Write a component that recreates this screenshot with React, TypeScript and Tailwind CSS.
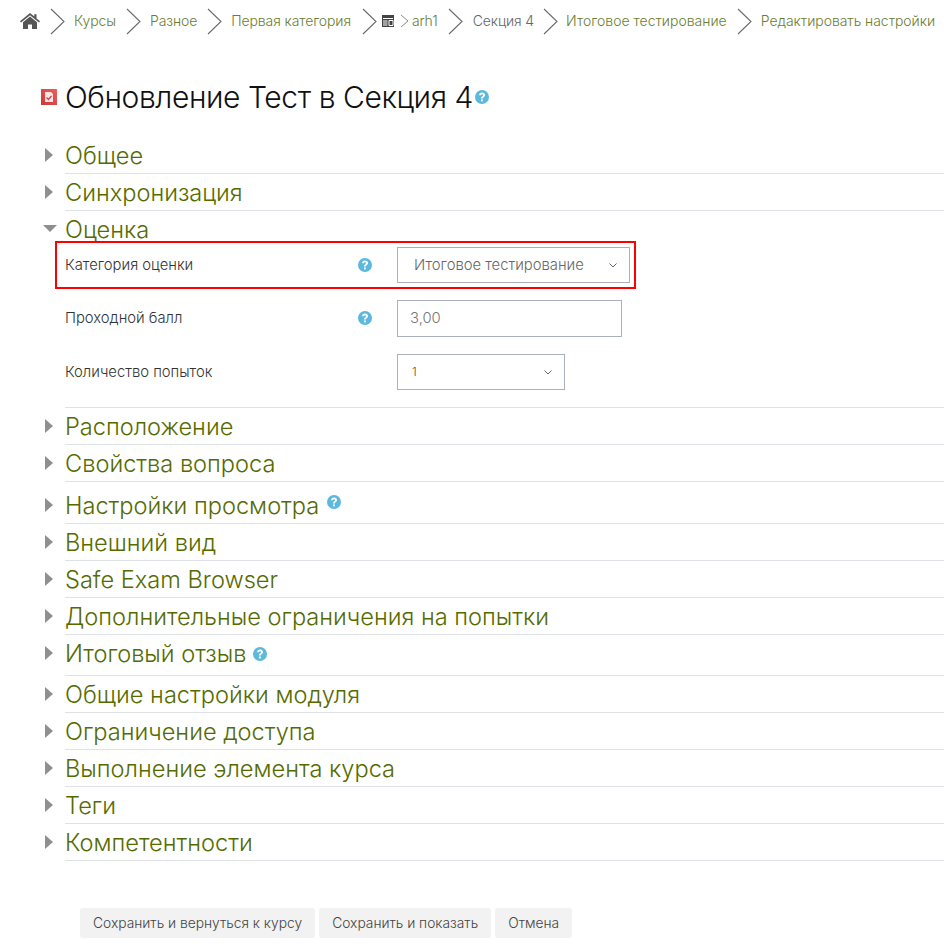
import React from 'react';

const font = "font-['Inter','Noto_Sans',sans-serif]";

const HelpIcon: React.FC<{ size?: number; className?: string }> = ({ size = 14, className = '' }) => (
  <svg width={size} height={size} viewBox="0 0 16 16" className={`shrink-0 ${className}`}>
    <circle cx="8" cy="8" r="8" fill="#5bb8de" />
    <path d="M4.6 6c.1-2 1.5-3.1 3.5-3.1 1.9 0 3.4 1.1 3.4 2.9 0 1.2-.6 1.8-1.5 2.4-.7.5-.9.8-.9 1.5H6.8c0-1.2.3-1.8 1.2-2.4.7-.5 1.1-.8 1.1-1.4 0-.6-.4-1-1-1-.8 0-1.2.4-1.3 1.1H4.6z" fill="#fff" />
    <rect x="6.8" y="10.8" width="2.2" height="2.2" fill="#fff" />
  </svg>
);

const Sep: React.FC<{ small?: boolean }> = ({ small }) =>
  small ? (
    <svg width="9" height="14" viewBox="0 0 9 14" className="shrink-0">
      <path d="M1 1l7 6-7 6" fill="none" stroke="#8a8a8a" strokeWidth="1" />
    </svg>
  ) : (
    <svg width="15" height="27" viewBox="0 0 15 27" className="shrink-0">
      <path d="M1 1l13 12.5L1 26" fill="none" stroke="#6a6a6a" strokeWidth="1.1" />
    </svg>
  );

const crumbClass = 'text-[14px] leading-none font-light whitespace-nowrap text-[#6b7d2f]';

const Section: React.FC<{ title: string; help?: boolean; extraTop?: boolean; extraBottom?: boolean }> = ({ title, help, extraTop, extraBottom }) => (
  <div className={`flex pl-[45px] ${extraTop ? 'pt-[5px]' : ''}`}>
    <div className="w-[20px] shrink-0 flex items-center h-[36px]">
      <svg width="8" height="14" viewBox="0 0 8 14"><path d="M0 0l8 7-8 7z" fill="#8f8f8f" /></svg>
    </div>
    <div className={`flex-1 border-b border-[#dee2e6] ${extraBottom ? 'pb-[4px]' : ''}`}>
      <div className="flex gap-2 items-center h-[36px] pt-[1px]">
        <h3 className="text-[23.6px] leading-none font-light text-[#556b00] whitespace-nowrap">{title}</h3>
        {help && <HelpIcon size={14} className={extraTop ? '-mt-[7px]' : '-ml-[1px]'} />}
      </div>
    </div>
  </div>
);

const Chevron: React.FC = () => (
  <svg width="8" height="5" viewBox="0 0 8 5" className="shrink-0">
    <path d="M.5.5L4 4 7.5.5" fill="none" stroke="#666" strokeWidth="1" />
  </svg>
);

const Row: React.FC<{ label: string; help?: boolean; children: React.ReactNode; className?: string }> = ({ label, help, children, className = '' }) => (
  <div className={`flex items-center ${className}`}>
    <label className="w-[293px] text-[14.8px] font-light text-[#333] whitespace-nowrap">{label}</label>
    <div className="w-[39px] flex">{help && <HelpIcon size={14} />}</div>
    {children}
  </div>
);

export default function App() {
  return (
    <div className={`${font} bg-white w-[944px] h-[951px] overflow-hidden`}>
      <nav className="flex items-center h-[42px] pl-[20px]">
        <svg width="20" height="16" viewBox="0 0 20 16" className="shrink-0 mr-[10px]">
          <path d="M10 0L0 8.3l1 1.2L10 2.2l9 7.3 1-1.2-3.5-2.9V1.2h-2.2v2.3z" fill="#555" />
          <path d="M10 3.6L3 9.3V16h5v-4.5h4V16h5V9.3z" fill="#555" />
        </svg>
        <Sep />
        <a className={`${crumbClass} tracking-[-0.1px] ml-[9px] mr-[10px]`}>Курсы</a>
        <Sep />
        <a className={`${crumbClass} tracking-[-0.1px] ml-[9px] mr-[10px]`}>Разное</a>
        <Sep />
        <a className={`${crumbClass} tracking-[-0.1px] ml-[9px] mr-[11px]`}>Первая категория</a>
        <Sep />
        <svg width="12" height="12" viewBox="0 0 12 12" className="shrink-0 ml-[5px] mr-[6px]">
          <rect width="12" height="12" fill="#444" />
          <path d="M1 3.5h10M1 6h4.5M1 8h4.5M1 10h4.5M7 5.5h4v5H7z" stroke="#fff" strokeWidth="1" fill="none" />
        </svg>
        <Sep small />
        <a className={`${crumbClass} tracking-[-0.1px] ml-[3px] mr-[10px]`}>arh1</a>
        <Sep />
        <a className={`${crumbClass} tracking-[-0.1px] ml-[10px] mr-[9px] text-[#666]`}>Секция 4</a>
        <Sep />
        <a className={`${crumbClass} ml-[8px] mr-[10px]`}>Итоговое тестирование</a>
        <Sep />
        <a className={`${crumbClass} tracking-[-0.05px] ml-[9px]`}>Редактировать настройки</a>
      </nav>

      <div className="flex items-center h-[44px] mt-[33px] pl-[41px]">
        <svg width="16" height="16" viewBox="0 0 16 16" className="shrink-0 mr-[8px]">
          <defs>
            <linearGradient id="quizIcon" x1="0" y1="1" x2="1" y2="0">
              <stop offset="0" stopColor="#c53a3a" />
              <stop offset="1" stopColor="#f25c5c" />
            </linearGradient>
          </defs>
          <rect width="16" height="16" fill="url(#quizIcon)" />
          <path d="M4 3h6l2 2v8H4z" fill="#fbe3e3" />
          <path d="M5.5 8.5l2 2 3-3.5" stroke="#d23c3c" strokeWidth="1.2" fill="none" />
        </svg>
        <h2 className="text-[30px] leading-none font-light tracking-[-0.42px] text-[#111] whitespace-nowrap">Обновление Тест в Секция 4</h2>
        <HelpIcon size={14} className="ml-[2px]" />
      </div>

      <div className="mt-[18px]">
        <Section title="Общее" />
        <Section title="Синхронизация" />
        <div className="flex pl-[43px]">
          <div className="w-[22px] shrink-0 h-[36px] flex items-center">
            <svg width="14" height="8" viewBox="0 0 14 8"><path d="M0 0h14L7 7z" fill="#8f8f8f" /></svg>
          </div>
          <div className="flex-1 border-b border-[#dee2e6] h-[197px]">
            <h3 className="h-[36px] pt-[1px] flex items-center text-[23.6px] leading-none font-light text-[#556b00]">Оценка</h3>
            <div className="flex flex-col -mt-[1px]">
              <div className="relative">
                <div className="absolute -left-[10px] -top-[5px] w-[581px] h-[48px] border-2 border-[#ff0000]" />
                <Row label="Категория оценки" help className="h-[38px]">
                  <div className="w-[233px] h-[36px] border border-[#a9b2bc] flex items-center justify-between pl-[16px] pr-[12px]">
                    <span className="text-[14.8px] font-light text-[#666] whitespace-nowrap">Итоговое тестирование</span>
                    <Chevron />
                  </div>
                </Row>
              </div>
              <Row label="Проходной балл" help className="h-[36px] mt-[16px]">
                <div className="w-[225px] h-[37px] border border-[#a9b2bc] flex items-center pl-[12px]">
                  <span className="text-[14.8px] font-light text-[#777]">3,00</span>
                </div>
              </Row>
              <Row label="Количество попыток" className="h-[36px] mt-[18px]">
                <div className="w-[168px] h-[36px] border border-[#a9b2bc] flex items-center justify-between pl-[14px] pr-[12px]">
                  <span className="text-[12px] font-light text-[#8a4a20]">1</span>
                  <Chevron />
                </div>
              </Row>
            </div>
          </div>
        </div>
        <Section title="Расположение" />
        <Section title="Свойства вопроса" />
        <Section title="Настройки просмотра" help extraTop />
        <Section title="Внешний вид" />
        <Section title="Safe Exam Browser" />
        <Section title="Дополнительные ограничения на попытки" />
        <Section title="Итоговый отзыв" help extraBottom />
        <Section title="Общие настройки модуля" />
        <Section title="Ограничение доступа" />
        <Section title="Выполнение элемента курса" />
        <Section title="Теги" />
        <Section title="Компетентности" />
      </div>

      <div className="flex gap-1 mt-[47px] pl-[80px]">
        <button className="h-[30px] px-[13px] rounded-[3px] bg-[#f2f2f2] text-[13.8px] font-light text-[#444] whitespace-nowrap">Сохранить и вернуться к курсу</button>
        <button className="h-[30px] px-[13px] rounded-[3px] bg-[#f2f2f2] text-[13.8px] font-light text-[#444] whitespace-nowrap">Сохранить и показать</button>
        <button className="h-[30px] px-[13px] rounded-[3px] bg-[#f2f2f2] text-[13.8px] font-light text-[#444] whitespace-nowrap">Отмена</button>
      </div>
    </div>
  );
}
